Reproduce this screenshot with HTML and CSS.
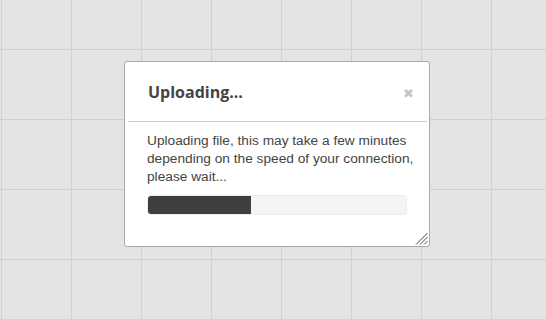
FILE: index.html
```html
<!DOCTYPE html>
<html lang="en">
<head>
  <meta charset="UTF-8">
  <title>Uploading</title>
  <link rel="stylesheet" href="styles.css">
</head>
<body>
  <div class="dialog">
    <div class="dialog-header">
      <div class="dialog-title">Uploading...</div>
      <span class="dialog-close">&#x2716;</span>
    </div>
    <div class="dialog-body">
      <p class="dialog-text">Uploading file, this may take a few minutes depending on the speed of your connection, please wait...</p>
      <div class="progress">
        <div class="progress-bar" style="width: 40%"></div>
      </div>
    </div>
    <svg class="dialog-grip" width="13" height="13" viewBox="0 0 13 13">
      <path d="M1 12.5 L12.5 1 M5 12.5 L12.5 5 M9 12.5 L12.5 9" stroke="#444" stroke-width="1" fill="none"/>
    </svg>
  </div>
</body>
</html>
```

FILE: styles.css
```css
html, body {
  height: 100%;
}
body {
  margin: 0;
  padding: 61px 0 0 124px;
  box-sizing: border-box;
  font-family: "Liberation Sans", Arial, sans-serif;
  background-color: #e4e4e4;
  background-image:
    linear-gradient(to right, #d0d0d0 1px, transparent 1px),
    linear-gradient(to bottom, #d0d0d0 1px, transparent 1px);
  background-size: 70px 70px;
  background-position: 1px 49px;
}
.dialog {
  position: relative;
  width: 306px;
  height: 186px;
  box-sizing: border-box;
  background-color: #fff;
  border: 1px solid #a9a9a9;
  border-radius: 3px;
  overflow: hidden;
}
.dialog-header {
  height: 59px;
  display: flex;
  align-items: center;
  justify-content: space-between;
  margin: 0 2px 0 3px;
  padding: 0 13px 0 20px;
  border-bottom: 1px solid #cfcfcf;
}
.dialog-title {
  font-family: "Open Sans", sans-serif;
  font-weight: 700;
  font-size: 16px;
  color: #444;
}
.dialog-close {
  font-family: "DejaVu Sans", sans-serif;
  font-size: 13px;
  color: #c4c4c4;
  margin-top: 3px;
}
.dialog-body {
  padding: 10px 22px 0 22px;
}
.dialog-text {
  margin: 0 -20px 9px 0;
  font-size: 13.7px;
  line-height: 18px;
  color: #444;
}
.progress {
  height: 20px;
  box-sizing: border-box;
  background-color: #f4f4f4;
  border: 1px solid #ececec;
  border-radius: 4px;
  overflow: hidden;
}
.progress-bar {
  height: 100%;
  background-color: #3f3f3f;
}
.dialog-grip {
  position: absolute;
  right: 1px;
  bottom: 1px;
}
```
